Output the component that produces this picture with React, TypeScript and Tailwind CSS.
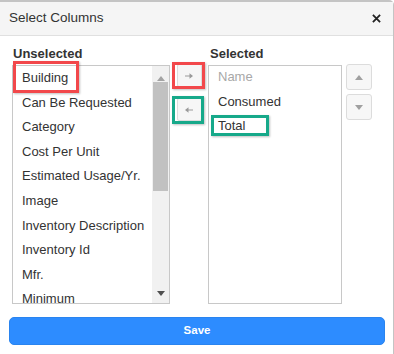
import React from 'react';

const unselected = [
	'Building',
	'Can Be Requested',
	'Category',
	'Cost Per Unit',
	'Estimated Usage/Yr.',
	'Image',
	'Inventory Description',
	'Inventory Id',
	'Mfr.',
	'Minimum',
];

const selected = [
	{ label: 'Name', locked: true },
	{ label: 'Consumed', locked: false },
	{ label: 'Total', locked: false },
];

function Arrow({ dir }: { dir: 'left' | 'right' }) {
	return (
		<svg width="8" height="6" viewBox="0 0 8 6" className={dir === 'left' ? 'rotate-180' : ''}>
			<path d="M0 2.4h5v1.2H0z M4.5 0.2L8 3 4.5 5.8z" fill="#9a9a9a" />
		</svg>
	);
}

function Tri({ up, color }: { up: boolean; color: string }) {
	return (
		<svg width="8" height="5" viewBox="0 0 8 5">
			<path d={up ? 'M0 5L4 0 8 5z' : 'M0 0L8 0 4 5z'} fill={color} />
		</svg>
	);
}

export default function App() {
	return (
		<div className="relative h-[354px] w-[394px] overflow-hidden bg-white font-['Liberation_Sans',Arial,sans-serif] text-[13px] text-[#333]">
			<div className="flex h-full flex-col rounded-tr-[5px] border-t-2 border-r border-[#c4c4c4]">
				{/* header */}
				<div className="flex h-[34px] items-center justify-between border-b border-[#e0e0e0] bg-[#f5f5f5] pl-[9px] pr-[12px]">
					<span className="text-[13.5px] text-[#333]">Select Columns</span>
					<svg width="9" height="9" viewBox="0 0 10 10">
						<path d="M1 1L9 9M9 1L1 9" stroke="#222" strokeWidth="2" />
					</svg>
				</div>

				{/* body */}
				<div className="flex pl-[12px] pt-[10px]">
					<div className="flex w-[158px] flex-col">
						<div className="mb-[4px] pl-px text-[13px] font-bold leading-[15px]">Unselected</div>
						<div className="flex h-[239px] overflow-hidden border border-[#c8c8c8]">
							<ul className="flex-1 overflow-hidden pl-[9px]">
								{unselected.map((item) => (
									<li key={item} className="h-[24.6px] leading-[23px] whitespace-nowrap">
										{item}
									</li>
								))}
							</ul>
							<div className="flex w-[17px] flex-col items-center bg-[#f1f1f1]">
								<div className="flex h-[16px] items-end justify-center pb-[1px]">
									<Tri up color="#a3a3a3" />
								</div>
								<div className="h-[109px] w-[15px] bg-[#c1c1c1]" />
								<div className="flex-1" />
								<div className="flex h-[15px] items-start justify-center pt-[3px]">
									<Tri up={false} color="#505050" />
								</div>
							</div>
						</div>
					</div>

					<div className="flex w-[38px] flex-col items-center gap-[11px] pt-[18px]">
						<button className="flex h-[23px] w-[25px] items-center justify-center rounded-[2px] border border-[#dcdcdc] bg-[#f6f6f6]">
							<Arrow dir="right" />
						</button>
						<button className="flex h-[23px] w-[25px] items-center justify-center rounded-[2px] border border-[#dcdcdc] bg-[#f6f6f6]">
							<Arrow dir="left" />
						</button>
					</div>

					<div className="flex w-[134px] flex-col">
						<div className="mb-[4px] pl-[2px] text-[13px] font-bold leading-[15px]">Selected</div>
						<ul className="h-[239px] border border-[#c8c8c8] pl-[9px]">
							{selected.map((item) => (
								<li
									key={item.label}
									className={`h-[24.6px] leading-[22px] ${item.locked ? 'text-[#a8a8a8]' : 'text-[#333]'}`}
								>
									{item.label}
								</li>
							))}
						</ul>
					</div>

					<div className="ml-[4px] flex flex-col gap-[4px] pt-[18px]">
						<button className="flex h-[26px] w-[26px] items-center justify-center rounded-[3px] border border-[#dcdcdc] bg-[#f7f7f7]">
							<Tri up color="#a0a0a0" />
						</button>
						<button className="flex h-[26px] w-[26px] items-center justify-center rounded-[3px] border border-[#dcdcdc] bg-[#f7f7f7]">
							<Tri up={false} color="#a0a0a0" />
						</button>
					</div>
				</div>

				<div className="px-[9px] pt-[13px]">
					<button className="flex h-[28px] w-[376px] items-center justify-center rounded-[5px] border border-[#2a84ef] bg-[#2d8cff] text-[11.5px] font-bold text-white">
						Save
					</button>
				</div>
			</div>

			{/* annotation highlights */}
			<div className="absolute left-[13px] top-[61px] h-[32px] w-[66px] border-[3px] border-[#f2484b] shadow-[1px_1px_2px_rgba(0,0,0,0.25)]" />
			<div className="absolute left-[172px] top-[62px] h-[27px] w-[33px] border-[3px] border-[#f2484b] shadow-[1px_1px_2px_rgba(0,0,0,0.25)]" />
			<div className="absolute left-[172px] top-[96px] h-[28px] w-[32px] border-[3px] border-[#17a98a] shadow-[1px_1px_2px_rgba(0,0,0,0.25)]" />
			<div className="absolute left-[211px] top-[115px] h-[21px] w-[58px] border-[3px] border-[#17a98a] shadow-[1px_1px_2px_rgba(0,0,0,0.25)]" />
		</div>
	);
}
